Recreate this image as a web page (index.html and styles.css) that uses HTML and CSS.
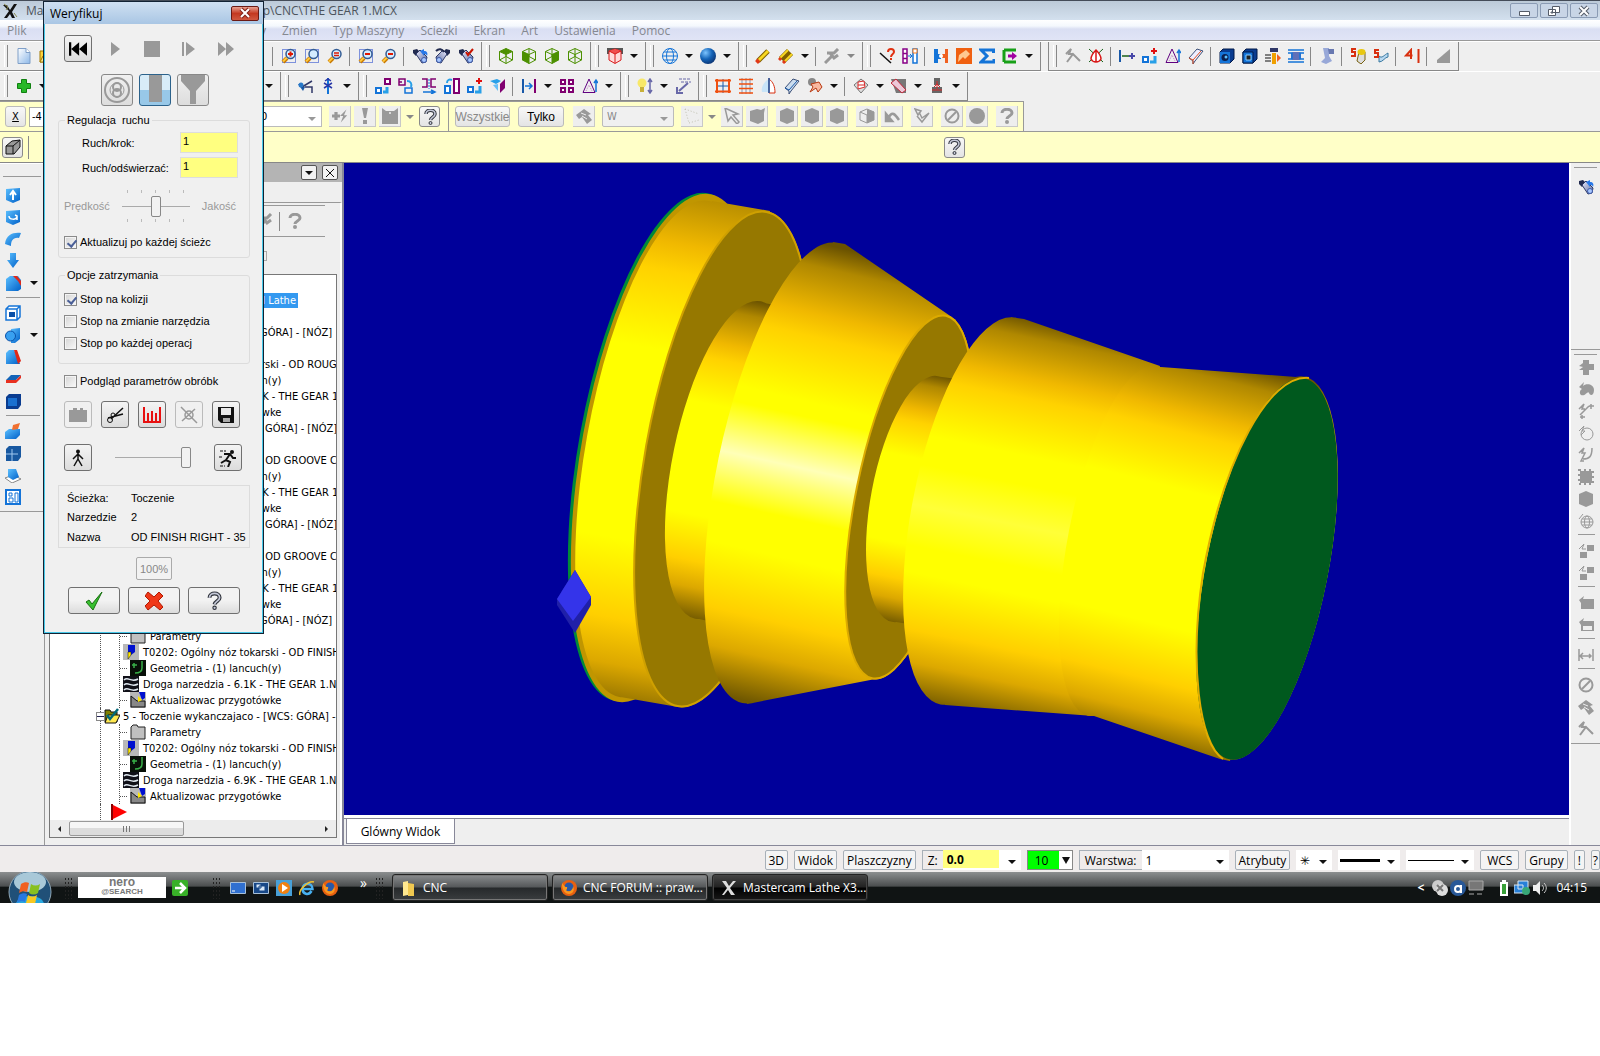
FILE: index.html
```html
<!DOCTYPE html>
<html lang="pl">
<head>
  <meta charset="UTF-8">
  <meta name="viewport" content="width=device-width, initial-scale=1.0">
  <title>Mastercam Lathe X3</title>
  <link rel="stylesheet" href="styles.css">
</head>
<body>
  <!-- icon set -->
  <svg class="sprite" aria-hidden="true">
    <defs>
      <linearGradient id="sheet" x1="0" y1="0" x2="1" y2="1"><stop offset="0" stop-color="#fff"/><stop offset="1" stop-color="#8db8e8"/></linearGradient>
      <linearGradient id="blue" x1="0" y1="0" x2="1" y2="1"><stop offset="0" stop-color="#5cc0ff"/><stop offset="1" stop-color="#0060c8"/></linearGradient>
      <radialGradient id="ball" cx=".35" cy=".3" r=".8"><stop offset="0" stop-color="#7cc4ff"/><stop offset=".5" stop-color="#1464b8"/><stop offset="1" stop-color="#0a2c68"/></radialGradient>
      <linearGradient id="metal" x1="0" y1="0" x2="1" y2="1"><stop offset="0" stop-color="#eef"/><stop offset="1" stop-color="#55669c"/></linearGradient>
    </defs>
    <symbol id="app" viewBox="0 0 16 16"><path d="M1 2h4l3 5 4-6h3l-5 8 3 6h-3l-2-4-3 4H2l5-7z" fill="#111"/><path d="M2 1l4 3-2 3M12 10l3 4" stroke="#8a8a50" fill="none"/></symbol>
    <symbol id="new" viewBox="0 0 16 16"><path d="M2 .5h8l4 4v11H2z" fill="url(#sheet)" stroke="#7f9fc8"/><path d="M10 .5v4h4" fill="#fff" stroke="#7f9fc8"/></symbol>
    <symbol id="open" viewBox="0 0 16 16"><path d="M1 3h5l1 2h8v9H1z" fill="#ffd23c" stroke="#a07800"/><path d="M4 8h11l-3 6H1z" fill="#ffe98a" stroke="#a07800"/></symbol>
    <symbol id="lens" viewBox="0 0 16 16"><path d="M6 10l-4 4" stroke="#c87800" stroke-width="4"/><path d="M6 9.500l-4 4" stroke="#ffc83c" stroke-width="2"/><circle cx="9.500" cy="6" r="4.500" fill="#d4ecff" stroke="#335c94" stroke-width="1.500"/></symbol>
    <symbol id="frame" viewBox="0 0 16 16"><path d="M1.500 1.500h13v13h-13z" fill="none" stroke="#0a32c8" stroke-dasharray="1 1"/></symbol>
    <symbol id="zoom-window" viewBox="0 0 16 16"><use href="#frame"/><use href="#lens"/><path d="M9.500 3.500v5M7 6h5" stroke="#e01800" stroke-width="2"/></symbol>
    <symbol id="zoom-target" viewBox="0 0 16 16"><use href="#frame"/><use href="#lens"/></symbol>
    <symbol id="zoom-fit" viewBox="0 0 16 16"><use href="#lens"/><path d="M7 5h5M7 7.500h5" stroke="#e01800" stroke-width="1.500"/></symbol>
    <symbol id="unzoom-window" viewBox="0 0 16 16"><use href="#frame"/><use href="#lens"/><path d="M7 6h5" stroke="#e01800" stroke-width="2"/></symbol>
    <symbol id="unzoom" viewBox="0 0 16 16"><use href="#lens"/><path d="M7 6h5" stroke="#e01800" stroke-width="2"/></symbol>
    <symbol id="scope" viewBox="0 0 16 16"><path d="M1 2l4-1 3 3-4 4-3-3z" fill="#222b50"/><path d="M4 6l4-4 7 7-1 5-4 1z" fill="url(#metal)" stroke="#2c3868"/><circle cx="12" cy="12" r="2.500" fill="#a8c8ff" stroke="#3c5aa8"/></symbol>
    <symbol id="scope-blue" viewBox="0 0 16 16"><use href="#scope"/><path d="M8 3l4-2v2c3 0 4 2 3 5-1-2-2-2-3-2v2z" fill="#2878e8"/></symbol>
    <symbol id="scope-turn" viewBox="0 0 16 16"><g transform="matrix(-1 0 0 1 16 0)"><use href="#scope"/></g><path d="M1 3c3-3 6-2 8 1" fill="none" stroke="#222b50" stroke-width="2"/></symbol>
    <symbol id="scope-red" viewBox="0 0 16 16"><use href="#scope"/><path d="M8 4l2 3 5-6" fill="none" stroke="#c81400" stroke-width="2"/></symbol>
    <symbol id="cube" viewBox="0 0 16 16"><path d="M8 .5l6.500 3v8.500L8 15.500 1.500 12V3.500zM1.500 3.500L8 6.500l6.500-3M8 6.500v9M8 .5v8M1.500 12L8 8.500l6.500 3.500" fill="none" stroke="#4c9000"/></symbol>
    <symbol id="cube-top" viewBox="0 0 16 16"><path d="M8 .5l6.500 3L8 6.500l-6.500-3z" fill="#4c9000"/><use href="#cube"/></symbol>
    <symbol id="cube-front" viewBox="0 0 16 16"><path d="M1.500 3.500L8 6.500v9L1.500 12z" fill="#4c9000"/><use href="#cube"/></symbol>
    <symbol id="cube-side" viewBox="0 0 16 16"><path d="M14.500 3.500L8 6.500v9l6.500-3.500z" fill="#4c9000"/><use href="#cube"/></symbol>
    <symbol id="cube-red" viewBox="0 0 16 16"><path d="M0 0h16v6H0z" fill="#555"/><path d="M8 1l6 2v9l-6 3.500L2 12V3z" fill="#fdd" stroke="#d81818"/><path d="M2 3l6-2 6 2-6 3z" fill="#f05050"/><path d="M2 3l6 3 6-3M8 6v9" fill="none" stroke="#d81818"/></symbol>
    <symbol id="globe" viewBox="0 0 16 16"><g fill="none" stroke="#1474d8"><circle cx="8" cy="8" r="7.500"/><ellipse cx="8" cy="8" rx="3.500" ry="7.500"/><path d="M.5 8h15M2 4h12M2 12h12"/></g></symbol>
    <symbol id="sphere" viewBox="0 0 16 16"><circle cx="8" cy="8" r="8" fill="url(#ball)"/></symbol>
    <symbol id="pencil" viewBox="0 0 16 16"><path d="M3 13L13 3" stroke="#806000" stroke-width="5"/><path d="M3.500 12.500L13 3" stroke="#f8d820" stroke-width="3"/><path d="M1.500 14.500l2.500-2.500" stroke="#e03818" stroke-width="4"/></symbol>
    <symbol id="pencils" viewBox="0 0 16 16"><path d="M2 10L10 2M6 14l8-8M4 12l8-8" stroke="#806000" stroke-width="3"/><path d="M2 10L10 2M6 14l8-8" stroke="#f8d820" stroke-width="2"/><path d="M1 12l2-2M5 15l2-2" stroke="#e03818" stroke-width="3"/></symbol>
    <symbol id="hammer" viewBox="0 0 16 16"><path d="M1 15l7-7M3 5h7l4-4M6 5l4 5 4-3" stroke="#999" stroke-width="3" fill="none"/></symbol>
    <symbol id="analyze" viewBox="0 0 16 16"><path d="M1 5l11 10" stroke="#111" stroke-width="1.500"/><path d="M9 4c0-4 6-4 6 0 0 2-3 2-3 5M12 10v2" stroke="#e03010" stroke-width="2" fill="none"/></symbol>
    <symbol id="films" viewBox="0 0 16 16"><path d="M1 1h4v14H1zM1 5.500h4M1 10.500h4" fill="#fff" stroke="#880088" stroke-width="1.500"/><path d="M11 1h4v14h-4z" fill="#fff" stroke="#1474d8" stroke-width="1.500"/><path d="M11 1h4v4h-4z" fill="#fff" stroke="#f07820"/><path d="M6 8h4M8 6l2 2-2 2" stroke="#1474d8" fill="none"/></symbol>
    <symbol id="merge" viewBox="0 0 16 16"><path d="M1 1v14h4v-4h3V6H5V1z" fill="#1474d8"/><path d="M15 1v14h-3v-5h-3V6h3V1z" fill="#f06020"/><circle cx="8" cy="8" r="2" fill="#fff"/></symbol>
    <symbol id="orange" viewBox="0 0 16 16"><path d="M0 0h16v16H0z" fill="#f06010"/><path d="M3 7l7-5 4 4-5 5-2-2-5 5" fill="#ffc890"/></symbol>
    <symbol id="sigma" viewBox="0 0 16 16"><path d="M14.500 5V2H2l6 6-6 6h13v-3" fill="none" stroke="#1474d8" stroke-width="3"/></symbol>
    <symbol id="port" viewBox="0 0 16 16"><path d="M14 2H2v12h12" fill="none" stroke="#18a018" stroke-width="3" stroke-dasharray="2 0"/><path d="M6 8h5" stroke="#a000a0" stroke-width="3"/><path d="M10 4l5 4-5 4z" fill="#a000a0"/></symbol>
    <symbol id="wing" viewBox="0 0 16 16"><path d="M1 6l5-5-2 5h4M2 14l6-8 7 7" fill="none" stroke="#999" stroke-width="2"/></symbol>
    <symbol id="drop" viewBox="0 0 16 16"><path d="M1 1l14 13M15 1L1 14" stroke="#186018"/><path d="M8 2c-3 3-5 6-5 9 2 4 8 4 10 0 0-3-2-6-5-9zM8 2v12" fill="#fff" stroke="#d81818" stroke-width="1.500"/></symbol>
    <symbol id="dim" viewBox="0 0 16 16"><path d="M1 2v12" stroke="#1858a8" stroke-width="2"/><path d="M3 8h7" stroke="#186018" stroke-width="1.500"/><path d="M13 5v6M10 8h6" stroke="#4848a8" stroke-width="2"/></symbol>
    <symbol id="boxes-add" viewBox="0 0 16 16"><path d="M1 9h5v5H1z" fill="#fff" stroke="#1474d8" stroke-width="2"/><path d="M8 14h5V8" stroke="#28a0e8" stroke-width="3" fill="none"/><path d="M12 0v6M9 3h6" stroke="#e01010" stroke-width="2"/></symbol>
    <symbol id="triangle" viewBox="0 0 16 16"><path d="M1 14.500L7 1l6 13.500z" fill="none" stroke="#600080"/><path d="M4 13l3-6 3 6" fill="none" stroke="#c080c0" stroke-dasharray="1 1"/><path d="M14 14V3M12 5l2-3 2 3" stroke="#1474d8" stroke-width="1.500" fill="none"/></symbol>
    <symbol id="ruler" viewBox="0 0 16 16"><path d="M1 10L9 1l6 2-8 10-2 3v-3z" fill="#eef" stroke="#3c5078"/><path d="M1 10l4 2v4M5 12l8-9" fill="none" stroke="#e05020"/></symbol>
    <symbol id="ruler-blue" viewBox="0 0 16 16"><path d="M1 10L9 1l6 2-8 10-2 3v-3z" fill="#cde" stroke="#3c5078"/><path d="M1 10l4 2 8-9" fill="none" stroke="#1858a8"/></symbol>
    <symbol id="block-round" viewBox="0 0 16 16"><path d="M1 4l3-3h11v10l-4 4H1z" fill="#0a3c90" stroke="#001848"/><path d="M1 4h10v11H1z" fill="#1474d8"/><circle cx="6" cy="9.500" r="3.500" fill="#0a2050"/><circle cx="7" cy="9" r="1.500" fill="#5cc0ff"/></symbol>
    <symbol id="block-square" viewBox="0 0 16 16"><path d="M1 4l3-3h11v10l-4 4H1z" fill="#0a3c90" stroke="#001848"/><path d="M1 4h10v11H1z" fill="#1474d8" stroke="#001848"/><path d="M4 7h5v5H4z" fill="#222" stroke="#8cf"/></symbol>
    <symbol id="mill" viewBox="0 0 16 16"><path d="M5 0h8v4H5z" fill="#303868"/><path d="M7 5h4v11H7z" fill="#f0a000"/><path d="M12 6l4 4-4 4z" fill="#f06020"/><path d="M0 7h6M0 10h6M0 13h6" stroke="#111"/></symbol>
    <symbol id="lathe" viewBox="0 0 16 16"><rect x="3" y="4" width="10" height="8" rx="2" fill="#6070b8"/><path d="M0 2h16M0 14h16M0 5h4v6H0M16 5h-4v6h4" stroke="#1474d8" fill="none" stroke-width="1.500"/></symbol>
    <symbol id="robot" viewBox="0 0 16 16"><path d="M4 0h6v8l3 5-6 3-5-2 4-4z" fill="#98a8d8"/><path d="M9 1h6v5h-5" fill="#6878b0"/></symbol>
    <symbol id="five-a" viewBox="0 0 16 16"><path d="M9 4h6v8l-4 4-4-3z" fill="#ddd" stroke="#776010"/><ellipse cx="11.500" cy="4" rx="4" ry="3" fill="#e8c810"/><path d="M6 1H2v3h3v4H1" fill="none" stroke="#d83010" stroke-width="2"/></symbol>
    <symbol id="five-b" viewBox="0 0 16 16"><path d="M6 8c3 3 5-1 9-3v4c-3 0-5 5-9 5z" fill="#b8d8f0" stroke="#3878a0"/><path d="M6 2H2v3h3v4H1" fill="none" stroke="#d83010" stroke-width="2"/></symbol>
    <symbol id="four" viewBox="0 0 16 16"><path d="M7 11V2L2 7.500h6.500M14.500 1v14" fill="none" stroke="#d83010" stroke-width="2"/></symbol>
    <symbol id="wedge" viewBox="0 0 16 16"><path d="M15 1v14H2v-3z" fill="#999"/></symbol>
    <symbol id="plus" viewBox="0 0 16 16"><path d="M5.500 1.500h5v4h4v5h-4v4h-5v-4h-4v-5h4z" fill="#28b828" stroke="#108010"/></symbol>
    <symbol id="cut" viewBox="0 0 16 16"><path d="M1 6l5 7 2-4L3 6z" fill="#1858a8"/><path d="M5 9l10-6M8 9h7v6" stroke="#303868" stroke-width="1.500" fill="none"/><circle cx="4" cy="7" r="2.500" fill="#2878c8"/></symbol>
    <symbol id="split" viewBox="0 0 16 16"><path d="M8 0v16" stroke="#1474d8" stroke-width="2"/><path d="M4 5l8 5M12 5l-8 5M5 3l3-2 3 2" stroke="#2838a8" stroke-width="1.500" fill="none"/></symbol>
    <symbol id="x-move" viewBox="0 0 16 16"><path d="M10 1h5v5h-5z" fill="#fff" stroke="#800070" stroke-width="2"/><path d="M1 10h5v5H1z" fill="#fff" stroke="#1474d8" stroke-width="2"/><path d="M8 14h4V9" stroke="#28a0e8" stroke-width="3" fill="none"/></symbol>
    <symbol id="x-rotate" viewBox="0 0 16 16"><path d="M1 1h6v6H1zM1 4h3" fill="none" stroke="#800070" stroke-width="1.500"/><path d="M7 10h7v5H7z" fill="none" stroke="#1474d8" stroke-width="1.500"/><path d="M9 3c4 0 5 3 4 6" stroke="#28a0e8" stroke-width="2" fill="none"/></symbol>
    <symbol id="x-mirror" viewBox="0 0 16 16"><path d="M1 1h5v8H1M15 9h-5V1h5" fill="none" stroke="#800070" stroke-width="1.500"/><path d="M8 1v10" stroke="#1474d8" stroke-dasharray="2 1"/><path d="M2 14h11M10 12l4 2-4 2" stroke="#1474d8" stroke-width="1.500" fill="none"/></symbol>
    <symbol id="x-scale" viewBox="0 0 16 16"><path d="M10 1h5v14h-5z" fill="#fff" stroke="#800070" stroke-width="2"/><path d="M1 8h5v7H1z" fill="#fff" stroke="#1474d8" stroke-width="2"/><path d="M3 5c0-3 2-4 5-3" stroke="#28a0e8" stroke-width="2" fill="none"/></symbol>
    <symbol id="x-project" viewBox="0 0 16 16"><path d="M0 3l7-2 4 2-5 3z" fill="#28a0e8"/><path d="M3 7l5-1v7z" fill="#68c0f8"/><path d="M10 6l5-5v9l-5 5z" fill="#800070"/></symbol>
    <symbol id="x-stretch" viewBox="0 0 16 16"><path d="M2 1v14M14 1v14" stroke="#1858a8" stroke-width="2"/><path d="M14 1v14" stroke="#800070" stroke-width="2"/><path d="M4 8h7M8 5l3 3-3 3" stroke="#1474d8" stroke-width="1.500" fill="none"/></symbol>
    <symbol id="x-array" viewBox="0 0 16 16"><path d="M2 2h4v4H2zM10 2h4v4h-4zM10 10h4v4h-4zM2 10h4v4H2z" fill="#fff" stroke="#800070" stroke-width="2"/></symbol>
    <symbol id="bulb" viewBox="0 0 16 16"><circle cx="5" cy="5" r="4.500" fill="#f8e868"/><path d="M3 9h4v5H3z" fill="#c8b038"/><path d="M13 2v12M11 4l2-3 2 3M11 12l2 3 2-3" stroke="#6868a8" stroke-width="1.500" fill="none"/></symbol>
    <symbol id="sweep" viewBox="0 0 16 16"><path d="M4 1h12M6 4h10" stroke="#6868a8" stroke-dasharray="3 1"/><path d="M13 5l-9 8M2 9v6h6" stroke="#6868a8" stroke-width="2" fill="none"/></symbol>
    <symbol id="net" viewBox="0 0 16 16"><path d="M8 1v14M1 8h14" stroke="#1858a8"/><path d="M2 1v14M14 1v14M0 2.500h16M0 13.500h16" stroke="#f05010" stroke-width="2"/></symbol>
    <symbol id="ruled" viewBox="0 0 16 16"><path d="M8 0v16M4 0v16M12 0v16" stroke="#8898b8"/><path d="M1 1.500h14M1 6h14M1 10.500h14M1 15h14" stroke="#f05010" stroke-width="1.500"/></symbol>
    <symbol id="revolve" viewBox="0 0 16 16"><path d="M8 1C2 4 0 10 1 14h7z" fill="#c8e4f8"/><path d="M8 0v15h6c0-7-2-11-6-14" fill="#fff" stroke="#d83010"/><path d="M8 0v15" stroke="#1858a8" stroke-width="1.500"/></symbol>
    <symbol id="patch" viewBox="0 0 16 16"><circle cx="5" cy="4" r="4" fill="#888"/><path d="M4 6l8-2 3 5-4 5-2-4-6 4 3-5z" fill="#f8b8a0" stroke="#b83810"/></symbol>
    <symbol id="solid-grid" viewBox="0 0 16 16"><path d="M1 7l7-6 7 6-7 8z" fill="#ddd" stroke="#777"/><path d="M5 4l6-1 1 6-7 2zM5 7h7" fill="#fff" stroke="#d82828"/></symbol>
    <symbol id="shade" viewBox="0 0 16 16"><path d="M0 1h15v14H5z" fill="#777"/><path d="M0 5l5-4 10 11-4 3z" fill="#ecc8d8" stroke="#c02838"/></symbol>
    <symbol id="tower" viewBox="0 0 16 16"><path d="M5 0h6v7H5zM3 9h10v6H3z" fill="#666"/><path d="M8 3v8M3 12h10M5 9l3-3 3 3" stroke="#d82828" fill="none"/></symbol>
    <symbol id="g-plusbolt" viewBox="0 0 20 16"><path d="M5 3v10M0 8h10" stroke="#999" stroke-width="4"/><path d="M18 0l-8 8h4l-3 8 8-9h-4z" fill="#999"/></symbol>
    <symbol id="g-bang" viewBox="0 0 16 16"><path d="M5 0h6L9 10H7zM6 12h4v4H6z" fill="#999"/></symbol>
    <symbol id="g-mask" viewBox="0 0 16 16"><path d="M0 0l4 3h8l4-3v16H0z" fill="#999"/><circle cx="8" cy="5" r="1" fill="#eee"/></symbol>
    <symbol id="help" viewBox="0 0 16 16"><path d="M4 5c0-5 9-5 9 0 0 3-4 3-4.500 6" fill="none" stroke="#30343c" stroke-width="3.500"/><path d="M4 5c0-5 9-5 9 0 0 3-4 3-4.500 6" fill="none" stroke="#c4c8d8" stroke-width="1.500"/><circle cx="8.500" cy="14" r="1.500" fill="#c4c8d8" stroke="#30343c"/></symbol>
    <symbol id="g-help" viewBox="0 0 16 16"><path d="M3 5c0-5 10-5 10 0 0 3-5 3-5 6" fill="none" stroke="#999" stroke-width="3"/><circle cx="8" cy="14" r="2" fill="#999"/></symbol>
    <symbol id="g-hands" viewBox="0 0 16 16"><path d="M0 7l8-6 7 5-3 1 4 5-5 4-5-7-3 2z" fill="#999"/><path d="M5 5l5 2M6 8l5 3" stroke="#eee"/></symbol>
    <symbol id="g-arrow" viewBox="0 0 16 16"><path d="M1 0l13 6-5 1 6 7-2 2-6-7-3 4z" fill="#eee" stroke="#999" stroke-width="1.500"/></symbol>
    <symbol id="g-poly" viewBox="0 0 16 16"><path d="M1 1l14 5M1 1l4 14M5 15l10-3" stroke="#c0c0b0" stroke-dasharray="1 2"/></symbol>
    <symbol id="g-hex" viewBox="0 0 16 16"><path d="M8 0l7 3v10l-7 3-7-3V3z" fill="#999"/></symbol>
    <symbol id="g-blob" viewBox="0 0 16 16"><path d="M1 3l7-2 4 1 4-2-1 5v8l-6 3-8-3z" fill="#999"/></symbol>
    <symbol id="g-half" viewBox="0 0 16 16"><path d="M8 1l7 3v8l-7 3-7-3V4zM1 4l7 3 7-3M8 7v8" fill="none" stroke="#999"/><path d="M8 1l7 3v8l-7 3z" fill="#999"/></symbol>
    <symbol id="g-undo" viewBox="0 0 16 16"><path d="M2 6v7h6zM5 9c3-6 6-3 10 3" fill="#999" stroke="#999" stroke-width="2.500" fill-opacity="0"/><path d="M1 5v8h8z" fill="#999"/></symbol>
    <symbol id="g-check" viewBox="0 0 16 16"><path d="M1 1l6 2-3 4zM3 8l5 6 7-9-7 5-3-6" fill="none" stroke="#999" stroke-width="1.500"/></symbol>
    <symbol id="g-no" viewBox="0 0 16 16"><circle cx="8" cy="8" r="6.500" fill="none" stroke="#999" stroke-width="2"/><path d="M4 12l8-8" stroke="#999" stroke-width="2"/></symbol>
    <symbol id="g-disc" viewBox="0 0 16 16"><circle cx="8" cy="8" r="8" fill="#999"/></symbol>
    <symbol id="g-plus" viewBox="0 0 16 16"><path d="M5 1h6v4h5v6h-5v5H5v-5H1l4-3-4-1 4-3z" fill="#999"/></symbol>
    <symbol id="g-cloud" viewBox="0 0 16 16"><path d="M1 6l5-5-1 4c3-3 11-2 11 4s-4 6-5 3-4 4-8 2c-2-2-1-5 1-6z" fill="#999"/></symbol>
    <symbol id="g-lines" viewBox="0 0 16 16"><path d="M1 6l5-5-2 5h3M2 12l9-9M13 1v5M11 3h5M4 12v4M2 14h5" stroke="#999" fill="none" stroke-width="1.500"/></symbol>
    <symbol id="g-circle" viewBox="0 0 16 16"><circle cx="9" cy="9" r="6" fill="none" stroke="#999"/><path d="M1 6l5-5-2 5h3l-4 4" stroke="#999" fill="none"/></symbol>
    <symbol id="g-fillet" viewBox="0 0 16 16"><path d="M1 6l5-5-2 5h3L3 14h3M5 12c6 0 9-2 9-11" stroke="#999" fill="none" stroke-width="1.500"/></symbol>
    <symbol id="g-rect" viewBox="0 0 16 16"><path d="M2 2h12v12H2z" fill="#999"/><path d="M1 1h14v14H1z" fill="none" stroke="#999" stroke-dasharray="2 3" stroke-width="2"/></symbol>
    <symbol id="g-web" viewBox="0 0 16 16"><g fill="none" stroke="#999"><circle cx="9" cy="9" r="6"/><ellipse cx="9" cy="9" rx="2.500" ry="6"/><path d="M3 9h12M4 6h10M4 12h10M1 6l4-5"/></g></symbol>
    <symbol id="g-pair" viewBox="0 0 16 16"><path d="M9 2h7v6H9zM2 9h7v6H2z" fill="#999"/><path d="M1 6l5-5-2 5h4" stroke="#999" fill="none"/></symbol>
    <symbol id="g-box" viewBox="0 0 16 16"><path d="M1 5l5-4-1 3h11v10H3V8z" fill="#999"/></symbol>
    <symbol id="g-boxline" viewBox="0 0 16 16"><path d="M1 5l5-4-1 3h11v10H3V8z" fill="#999"/><path d="M5 9h9v4H5z" fill="#eee"/></symbol>
    <symbol id="g-dim" viewBox="0 0 16 16"><path d="M1 2v12M15 2v12M3 9h10M5 6L2 9l3 3M11 7l2 2-2 2" stroke="#999" fill="none" stroke-width="1.500"/></symbol>
    <symbol id="cube-button" viewBox="0 0 16 16"><path d="M1 7l6-5 8-1v7l-6 7H1z" fill="#999" stroke="#111"/><path d="M1 7h7l7-6M8 7v8" fill="none" stroke="#111"/></symbol>
    <!-- solids bar -->
    <symbol id="s-up" viewBox="0 0 16 16"><path d="M1 2l14-1v12l-7 3-7-3z" fill="url(#blue)"/><path d="M8 13V5M5 8l3-4 3 4" stroke="#fff" stroke-width="2" fill="none"/></symbol>
    <symbol id="s-turn" viewBox="0 0 16 16"><path d="M1 2l14-1v12l-7 3-7-3z" fill="url(#blue)"/><path d="M4 7c0 4 7 4 8 1M10 6l2 1v4" stroke="#fff" stroke-width="1.500" fill="none"/></symbol>
    <symbol id="s-arc" viewBox="0 0 16 16"><path d="M0 13C1 3 9 1 16 2l-2 5C8 6 6 10 6 15z" fill="url(#blue)"/></symbol>
    <symbol id="s-down" viewBox="0 0 16 16"><path d="M5 0h6v7h3l-6 8-6-8h3z" fill="url(#blue)"/></symbol>
    <symbol id="s-fillet" viewBox="0 0 16 16"><path d="M1 4l4-3h8l3 4v9l-3 2H1z" fill="url(#blue)"/><path d="M8 1h4l4 5v5l-3-5z" fill="#e02818"/></symbol>
    <symbol id="s-shell" viewBox="0 0 16 16"><path d="M1 4l3-3h11v11l-3 3H1zM1 4h11v11M12 4l3-3" fill="#fff" stroke="#1474d8" stroke-width="1.500"/><path d="M4 7h6v5H4z" fill="#0a50a8"/></symbol>
    <symbol id="s-bool" viewBox="0 0 16 16"><path d="M6 2l9-1v11l-5 4H6z" fill="url(#blue)"/><circle cx="5.500" cy="9" r="5" fill="#38a0f0" stroke="#0a50a8"/></symbol>
    <symbol id="s-draft" viewBox="0 0 16 16"><path d="M1 4l3-3h5l6 14H1z" fill="url(#blue)"/><path d="M9 1h3l4 11-3 3z" fill="#e02818"/></symbol>
    <symbol id="s-trim" viewBox="0 0 16 16"><path d="M1 9l5-5h10l-5 5z" fill="#1464b8"/><path d="M1 9h10l5-5v3l-5 5H1z" fill="#e83020"/></symbol>
    <symbol id="s-block" viewBox="0 0 16 16"><path d="M1 4l3-3h12v11l-3 4H1z" fill="#0a3c90"/><path d="M3 5h9v8H3z" fill="#1a70d0"/></symbol>
    <symbol id="s-pull" viewBox="0 0 16 16"><path d="M0 9l4-3h11v6l-4 4H0z" fill="url(#blue)"/><path d="M7 7l1-5 7-2-2 6z" fill="#f07030"/></symbol>
    <symbol id="s-find" viewBox="0 0 16 16"><path d="M1 4l3-3h12v11l-3 4H1z" fill="#1858a0"/><path d="M1 9h12M7 4v12" stroke="#a0c8f0"/></symbol>
    <symbol id="s-layout" viewBox="0 0 16 16"><path d="M0 11l8-3 8 4-9 4z" fill="#fff" stroke="#888"/><path d="M3 2h8l3 8-6 3-5-3z" fill="url(#blue)"/></symbol>
    <symbol id="s-views" viewBox="0 0 16 16"><path d="M1 1h14v14H1z" fill="#fff" stroke="#1474d8" stroke-width="2"/><path d="M4 4h3v3H4zM4 9h4v4H4zM10 4h3v9h-3z" fill="none" stroke="#1474d8"/></symbol>
    <!-- operations tree -->
    <symbol id="t-folder" viewBox="0 0 16 16"><path d="M1 3l2-2h4l1 2h7v12H1z" fill="#c0c0c0" stroke="#222"/></symbol>
    <symbol id="t-tool" viewBox="0 0 16 16"><path d="M0 0h16v16H0z" fill="#b8b8b8"/><path d="M5 1h7v7l-4 3-3-3z" fill="#0010d0"/><path d="M5 8h3v3l-3 4z" fill="#ffe800" stroke="#111" stroke-width=".5"/></symbol>
    <symbol id="t-geom" viewBox="0 0 16 16"><path d="M0 0h16v16H0z" fill="#081008"/><path d="M4 3v5M2 5h5M12 1v7c0 4-3 5-7 5" stroke="#38b048" fill="none" stroke-width="1.500"/></symbol>
    <symbol id="t-path" viewBox="0 0 16 16"><path d="M0 0h16v16H0z" fill="#101018"/><path d="M1 4c4-4 7 3 14-1M1 9c4-4 7 3 14-1M1 14c4-4 7 3 14-1" stroke="#e0e8f0" stroke-width="1.500" fill="none"/></symbol>
    <symbol id="t-stock" viewBox="0 0 16 16"><path d="M0 0h16v16H0z" fill="#b8b8b8"/><path d="M1 4l6 5h8v6H1z" fill="#888" stroke="#111"/><path d="M9 0h6v6l-3 2z" fill="#0010d0"/><path d="M8 4l4 4-4 2z" fill="#ffe800"/></symbol>
    <symbol id="t-op" viewBox="0 0 16 16"><path d="M1 2h5l1 2h6v10H1z" fill="#808000" stroke="#111"/><path d="M4 7h12l-4 8H1z" fill="#ffe850" stroke="#111"/><path d="M3 7l3 4 8-10" stroke="#006878" stroke-width="2.500" fill="none"/></symbol>
    <!-- verify dialog -->
    <symbol id="v-start" viewBox="0 0 16 16"><path d="M0 2h2v12H0zM9 2v12L2 8zM16 2v12L9 8z" fill="#000"/></symbol>
    <symbol id="v-play" viewBox="0 0 16 16"><path d="M4 1l9 7-9 7z" fill="#999"/></symbol>
    <symbol id="v-stop" viewBox="0 0 16 16"><path d="M0 0h16v16H0z" fill="#999"/></symbol>
    <symbol id="v-step" viewBox="0 0 16 16"><path d="M1 1h2v14H1zM5 1l9 7-9 7z" fill="#999"/></symbol>
    <symbol id="v-fast" viewBox="0 0 16 16"><path d="M0 1l8 7-8 7zM8 1l8 7-8 7z" fill="#999"/></symbol>
    <symbol id="v-simtool" viewBox="0 0 30 30"><g fill="none" stroke="#999" stroke-width="2"><circle cx="15" cy="15" r="12"/><circle cx="15" cy="12" r="4"/><circle cx="15" cy="18" r="4"/><circle cx="15" cy="15" r="7" stroke-width="1"/></g></symbol>
    <symbol id="v-tool" viewBox="0 0 30 30"><path d="M9 0h13v27H9z" fill="#999"/></symbol>
    <symbol id="v-holder" viewBox="0 0 30 30"><path d="M3 0h24v6l-9 10v13h-6V16L3 6z" fill="#999"/></symbol>
    <symbol id="v-setup" viewBox="0 0 18 18"><path d="M0 4h4V2h4v2h3V2h3v2h4v12H0z" fill="#999"/></symbol>
    <symbol id="v-section" viewBox="0 0 18 18"><path d="M17 2L5 13M17 8L2 12" stroke="#111" stroke-width="1.500"/><circle cx="7" cy="9" r="2" fill="none" stroke="#111"/><circle cx="4" cy="14" r="2.500" fill="none" stroke="#111"/></symbol>
    <symbol id="v-measure" viewBox="0 0 18 18"><path d="M1 1v15h16V1M5 16V7M9 16V5M13 16V7" fill="none" stroke="#e81010" stroke-width="2"/></symbol>
    <symbol id="v-fit" viewBox="0 0 18 18"><circle cx="9" cy="9" r="4" fill="none" stroke="#999" stroke-width="1.500"/><path d="M1 1l16 16M15 3L2 15" stroke="#999" stroke-width="1.500"/></symbol>
    <symbol id="v-save" viewBox="0 0 18 18"><path d="M1 1h16v16H4l-3-3z" fill="#111"/><path d="M4 2h10v7H4z" fill="#e8e8e8"/><path d="M6 12h7v4H6z" fill="#aaa"/></symbol>
    <symbol id="v-walk" viewBox="0 0 18 18"><circle cx="9" cy="2.500" r="2" fill="#111"/><path d="M9 4v6M9 10l-4 7M9 10l4 7M4 10l5-5 5 5" stroke="#111" stroke-width="1.500" fill="none"/></symbol>
    <symbol id="v-run" viewBox="0 0 18 18"><circle cx="13" cy="3" r="2" fill="#111"/><path d="M11 5l-4 6 4 2-2 5M7 11l-5 3M5 5h6l3 4h3" stroke="#111" stroke-width="2" fill="none"/><path d="M1 2h6M0 8h4M1 17h5" stroke="#111" stroke-dasharray="3 1"/></symbol>
    <symbol id="v-ok" viewBox="0 0 18 18"><path d="M1 10l3-2 3 4L17 0 8 18z" fill="#38c030" stroke="#187010"/></symbol>
    <symbol id="v-cancel" viewBox="0 0 18 18"><path d="M3 0l6 5 5-5 4 4-5 5 5 6-3 3-6-5-6 5-3-4 5-5-5-5z" fill="#f03818" stroke="#b01800"/></symbol>
    <!-- taskbar -->
    <symbol id="k-orb" viewBox="0 0 44 44"><circle cx="22" cy="22" r="21" fill="#205078" stroke="#90a8b8"/><ellipse cx="22" cy="12" rx="16" ry="10" fill="#a8c8d8"/><ellipse cx="22" cy="34" rx="14" ry="8" fill="#28a8e0"/><path d="M13 14c3-2 6-2 8-1l-2 9c-2-1-5-1-8 1z" fill="#f06020"/><path d="M23 14c3 2 6 2 9 0l-2 9c-3 2-6 2-9 0z" fill="#88c020"/><path d="M11 25c3-2 6-2 8-1l-2 8c-2-1-5-1-8 1z" fill="#2878e0"/><path d="M20 25c3 2 6 2 9 0l-2 9c-3 2-6 1-9-1z" fill="#f8c820"/></symbol>
    <symbol id="k-go" viewBox="0 0 16 16"><rect width="16" height="16" rx="2" fill="#38b028"/><path d="M3 8h9M8 3l5 5-5 5" stroke="#fff" stroke-width="2.500" fill="none"/></symbol>
    <symbol id="k-desk" viewBox="0 0 16 16"><path d="M.5 2.500h15v11H.5z" fill="#3070d0" stroke="#a8c0d8"/><path d="M2 11h3" stroke="#fff"/></symbol>
    <symbol id="k-flip" viewBox="0 0 16 16"><path d="M.5 2.500h15v11H.5z" fill="#184888" stroke="#a8c0d8"/><path d="M3 4h5v4H3zM6 6h6v5H6z" fill="#d8e8f8" stroke="#184888"/></symbol>
    <symbol id="k-media" viewBox="0 0 16 16"><path d="M0 0h16v16H0z" fill="#48a0d8"/><circle cx="8" cy="8" r="6" fill="#f08010"/><path d="M6 4l6 4-6 4z" fill="#fff"/></symbol>
    <symbol id="k-ie" viewBox="0 0 16 16"><path d="M12.500 11c-3 5-9 3-9-2 0-7 10-7 10 0H4" fill="none" stroke="#48b0f0" stroke-width="2.500"/><path d="M1 15C-1 10 10 0 15 2" stroke="#f0c030" fill="none" stroke-width="1.500"/></symbol>
    <symbol id="k-fox" viewBox="0 0 16 16"><circle cx="8" cy="8" r="8" fill="#e86010"/><circle cx="8" cy="7" r="4.500" fill="#2858a8"/><path d="M1 3c2 2 2 4 5 4 1 2-2 3 0 4 3 1 6-1 6-5 2 4 0 8-4 8S1 10 1 3z" fill="#f89820"/></symbol>
    <symbol id="k-folder" viewBox="0 0 16 16"><path d="M2 2l5-1v14l-5 1z" fill="#ffe890"/><path d="M7 3l6 1v12H7z" fill="#f0c850"/></symbol>
    <symbol id="k-x" viewBox="0 0 16 16"><path d="M1 1h4l3 5 4-5h3L9 8l5 7h-4l-3-5-4 5H1l5-7z" fill="#ddd"/></symbol>
    <symbol id="k-skype" viewBox="0 0 16 16"><circle cx="6" cy="6" r="6" fill="#ccc"/><circle cx="10" cy="10" r="6" fill="#ddd"/><path d="M5 5l6 6M11 5l-6 6" stroke="#777" stroke-width="2"/></symbol>
    <symbol id="k-a" viewBox="0 0 16 16"><circle cx="8" cy="8" r="8" fill="#285898"/><circle cx="8" cy="9" r="3" fill="none" stroke="#fff" stroke-width="2"/><path d="M11 5v8" stroke="#fff" stroke-width="2"/></symbol>
    <symbol id="k-screen" viewBox="0 0 16 16"><path d="M1 1h14v9H1zM1 14h5M9 14h5" fill="#777" stroke="#aaa"/></symbol>
    <symbol id="k-batt" viewBox="0 0 16 16"><path d="M6 0h4v2h2v14H4V2h2z" fill="#fff"/><path d="M6 4h4v10H6z" fill="#38a038"/></symbol>
    <symbol id="k-net" viewBox="0 0 16 16"><path d="M4 1h10v8H4zM0 5h9v8H0z" fill="#2880d8" stroke="#dde8f0"/><circle cx="12" cy="11" r="4" fill="#38a878"/></symbol>
    <symbol id="k-vol" viewBox="0 0 16 16"><path d="M1 5h3l4-4v14l-4-4H1z" fill="#eee"/><path d="M10 5c2 2 2 4 0 6M12 3c3 3 3 7 0 10" stroke="#ccc" fill="none"/></symbol>
  </svg>

  <div class="app">
    <header class="titlebar">
      <svg><use href="#app"/></svg>
      <div class="caption"><span>Mastercam Lathe X3</span><span>C:\Desktop\CNC\THE GEAR 1.MCX</span></div>
      <div class="window-buttons">
        <button aria-label="Minimalizuj"><svg viewBox="0 0 14 12"><path d="M2.500 6.500h10v4h-10z" fill="#fff" stroke="#555c68"/></svg></button>
        <button aria-label="Przywróć"><svg viewBox="0 0 14 12"><path d="M5.500 1.500h7v6h-7zM1.500 4.500h7v6h-7zM4 7h2v1H4z" fill="#fff" stroke="#555c68"/></svg></button>
        <button aria-label="Zamknij"><svg viewBox="0 0 14 12"><path d="M3 2l8 8M11 2l-8 8" stroke="#555c68" stroke-width="4"/><path d="M3 2l8 8M11 2l-8 8" stroke="#fff" stroke-width="2"/></svg></button>
      </div>
    </header>

    <nav class="menu">
      <div class="menu-first"><a href="#">Plik</a><a href="#">Edycja</a><a href="#">Widok</a><a href="#">Analiza</a><a href="#">Bryly</a></div>
      <a href="#">Zmien</a><a href="#">Typ Maszyny</a><a href="#">Sciezki</a><a href="#">Ekran</a><a href="#">Art</a><a href="#">Ustawienia</a><a href="#">Pomoc</a>
    </nav>

    <div class="toolbar">
      <div class="group file-group">
        <button><svg><use href="#new"/></svg></button><button><svg><use href="#open"/></svg></button>
        <i class="sep push"></i>
        <button><svg><use href="#zoom-window"/></svg></button><button><svg><use href="#zoom-target"/></svg></button><button><svg><use href="#zoom-fit"/></svg></button>
        <i class="sep"></i>
        <button><svg><use href="#unzoom-window"/></svg></button><button><svg><use href="#unzoom"/></svg></button>
        <i class="sep"></i>
        <button><svg><use href="#scope-blue"/></svg></button><button><svg><use href="#scope-turn"/></svg></button><button><svg><use href="#scope-red"/></svg></button>
      </div>
      <div class="group"><button><svg><use href="#cube-top"/></svg></button><button><svg><use href="#cube-front"/></svg></button><button><svg><use href="#cube-side"/></svg></button><button><svg><use href="#cube"/></svg></button></div>
      <div class="group"><button><svg><use href="#cube-red"/></svg></button><button class="drop"></button></div>
      <div class="group"><button><svg><use href="#globe"/></svg></button><button class="drop"></button><button><svg><use href="#sphere"/></svg></button><button class="drop"></button></div>
      <div class="group"><button><svg><use href="#pencil"/></svg></button><button><svg><use href="#pencils"/></svg></button><button class="drop"></button><i class="sep"></i><button><svg><use href="#hammer"/></svg></button><button class="drop off"></button></div>
      <div class="group"><button><svg><use href="#analyze"/></svg></button><button><svg><use href="#films"/></svg></button><i class="sep"></i><button><svg><use href="#merge"/></svg></button><button><svg><use href="#orange"/></svg></button><button><svg><use href="#sigma"/></svg></button><button><svg><use href="#port"/></svg></button><button class="drop"></button></div>
      <div class="group apart"><button><svg><use href="#wing"/></svg></button><button><svg><use href="#drop"/></svg></button><i class="sep"></i><button><svg><use href="#dim"/></svg></button><button><svg><use href="#boxes-add"/></svg></button><button><svg><use href="#triangle"/></svg></button><button><svg><use href="#ruler"/></svg></button><i class="sep"></i><button><svg><use href="#block-round"/></svg></button><button><svg><use href="#block-square"/></svg></button><button><svg><use href="#mill"/></svg></button><button><svg><use href="#lathe"/></svg></button><i class="sep"></i><button><svg><use href="#robot"/></svg></button><i class="sep"></i><button><svg><use href="#five-a"/></svg></button><button><svg><use href="#five-b"/></svg></button><i class="sep"></i><button><svg><use href="#four"/></svg></button><i class="sep"></i><button><svg><use href="#wedge"/></svg></button></div>
    </div>

    <div class="toolbar">
      <div class="group sketch-group"><button><svg><use href="#plus"/></svg></button><button class="drop"></button><button class="drop push"></button></div>
      <div class="group"><button><svg><use href="#cut"/></svg></button><button><svg><use href="#split"/></svg></button><button class="drop"></button></div>
      <div class="group"><button><svg><use href="#x-move"/></svg></button><button><svg><use href="#x-rotate"/></svg></button><button><svg><use href="#x-mirror"/></svg></button><button><svg><use href="#x-scale"/></svg></button><button><svg><use href="#boxes-add"/></svg></button><button><svg><use href="#x-project"/></svg></button><i class="sep"></i><button><svg><use href="#x-stretch"/></svg></button><button class="drop"></button><button><svg><use href="#x-array"/></svg></button><button><svg><use href="#triangle"/></svg></button><button class="drop"></button></div>
      <div class="group"><button><svg><use href="#bulb"/></svg></button><button class="drop"></button><button><svg><use href="#sweep"/></svg></button></div>
      <div class="group"><button><svg><use href="#net"/></svg></button><button><svg><use href="#ruled"/></svg></button><button><svg><use href="#revolve"/></svg></button><button><svg><use href="#ruler-blue"/></svg></button><button><svg><use href="#patch"/></svg></button><button class="drop"></button><i class="sep"></i><button><svg><use href="#solid-grid"/></svg></button><button class="drop"></button><button><svg><use href="#shade"/></svg></button><button class="drop"></button><button><svg><use href="#tower"/></svg></button><button class="drop"></button></div>
    </div>

    <div class="ribbon">
      <div class="ribbon-bar">
        <div class="coords">
          <button class="raised axis">X</button>
          <input class="coord" value="-4" aria-label="X">
          <div class="combo coord-z"><select aria-label="Z"><option>0</option></select></div>
          <button class="flat"><svg><use href="#g-plusbolt"/></svg></button><button class="flat"><svg><use href="#g-bang"/></svg></button><button class="flat"><svg><use href="#g-mask"/></svg></button><button class="drop off slim"></button><button class="raised square"><svg><use href="#help"/></svg></button>
        </div>
        <div class="select-bar">
          <button class="raised word off">Wszystkie</button>
          <button class="raised word tylko">Tylko</button>
          <button class="flat"><svg><use href="#g-hands"/></svg></button>
          <div class="combo filter"><select aria-label="Filtr" disabled><option>W</option></select></div>
          <button class="flat"><svg><use href="#g-poly"/></svg></button><button class="drop off slim"></button>
          <button class="flat"><svg><use href="#g-arrow"/></svg></button><button class="flat"><svg><use href="#g-blob"/></svg></button><i class="gap"></i>
          <button class="flat"><svg><use href="#g-hex"/></svg></button><button class="flat"><svg><use href="#g-hex"/></svg></button><button class="flat"><svg><use href="#g-hex"/></svg></button><i class="gap"></i>
          <button class="flat"><svg><use href="#g-half"/></svg></button><button class="flat"><svg><use href="#g-undo"/></svg></button><i class="gap"></i>
          <button class="flat"><svg><use href="#g-check"/></svg></button><i class="gap"></i>
          <button class="flat"><svg><use href="#g-no"/></svg></button><button class="flat"><svg><use href="#g-disc"/></svg></button><i class="gap"></i>
          <button class="flat"><svg><use href="#g-help"/></svg></button>
        </div>
      </div>
    </div>
    <div class="prompt">
      <button class="raised square"><svg><use href="#cube-button"/></svg></button>
      <i class="sep"></i>
      <button class="raised square prompt-help"><svg><use href="#help"/></svg></button>
    </div>

    <main class="work">
      <aside class="solids">
        <div class="solids-bar">
          <button><svg><use href="#s-up"/></svg></button>
          <button><svg><use href="#s-turn"/></svg></button>
          <button><svg><use href="#s-arc"/></svg></button>
          <button><svg><use href="#s-down"/></svg></button>
          <div><button><svg><use href="#s-fillet"/></svg></button><button class="drop"></button></div>
          <hr>
          <button><svg><use href="#s-shell"/></svg></button>
          <div><button><svg><use href="#s-bool"/></svg></button><button class="drop"></button></div>
          <button><svg><use href="#s-draft"/></svg></button>
          <button><svg><use href="#s-trim"/></svg></button>
          <button><svg><use href="#s-block"/></svg></button>
          <hr>
          <button><svg><use href="#s-pull"/></svg></button>
          <button><svg><use href="#s-find"/></svg></button>
          <button><svg><use href="#s-layout"/></svg></button>
          <button><svg><use href="#s-views"/></svg></button>
        </div>
      </aside>

      <section class="manager">
        <div class="manager-head">
          <button class="down" aria-label="Menu"></button>
          <button aria-label="Zamknij"><svg viewBox="0 0 10 10"><path d="M1 1l8 8M9 1l-8 8" stroke="#111"/></svg></button>
        </div>
        <div class="manager-tabs"></div>
        <div class="manager-body">
          <div class="manager-tools"><svg><use href="#hammer"/></svg><i class="sep"></i><svg><use href="#g-help"/></svg></div>
          <div class="manager-mini"><i></i></div>
          <div class="tree">
            <ul class="root">
              <li><div class="row">Grupa maszyn-1</div></li>
              <li><div class="row machine"><span>Wlasciwosci - Default Mill and Lathe</span></div></li>
              <li><div class="row">Grupa sciezek-1</div></li>
            </ul>
            <ul class="ops">
              <li>
                <div class="row op"><b></b><svg><use href="#t-op"/></svg>1 - Toczenie czola - [WCS: GÓRA] - [NÓZ]</div>
                <ul class="steps">
                  <li class="row"><svg><use href="#t-folder"/></svg>Parametry</li>
                  <li class="row"><svg><use href="#t-tool"/></svg>T0101: Ogólny nóz tokarski - OD ROUGH RIGHT</li>
                  <li class="row"><svg><use href="#t-geom"/></svg>Geometria - (1) lancuch(y)</li>
                  <li class="row"><svg><use href="#t-path"/></svg>Droga narzedzia - 112.1K - THE GEAR 1.NC</li>
                  <li class="row"><svg><use href="#t-stock"/></svg>Aktualizowac przygotówke</li>
                </ul>
              </li>
              <li>
                <div class="row op"><b></b><svg><use href="#t-op"/></svg>2 - Toczenie rowków - [WCS: GÓRA] - [NÓZ]</div>
                <ul class="steps">
                  <li class="row"><svg><use href="#t-folder"/></svg>Parametry</li>
                  <li class="row"><svg><use href="#t-tool"/></svg>T1818: Nóz do rowków - OD GROOVE CENTER</li>
                  <li class="row"><svg><use href="#t-geom"/></svg>Geometria - (1) lancuch(y)</li>
                  <li class="row"><svg><use href="#t-path"/></svg>Droga narzedzia - 114.2K - THE GEAR 1.NC</li>
                  <li class="row"><svg><use href="#t-stock"/></svg>Aktualizowac przygotówke</li>
                </ul>
              </li>
              <li>
                <div class="row op"><b></b><svg><use href="#t-op"/></svg>3 - Toczenie rowków - [WCS: GÓRA] - [NÓZ]</div>
                <ul class="steps">
                  <li class="row"><svg><use href="#t-folder"/></svg>Parametry</li>
                  <li class="row"><svg><use href="#t-tool"/></svg>T1818: Nóz do rowków - OD GROOVE CENTER</li>
                  <li class="row"><svg><use href="#t-geom"/></svg>Geometria - (1) lancuch(y)</li>
                  <li class="row"><svg><use href="#t-path"/></svg>Droga narzedzia - 113.8K - THE GEAR 1.NC</li>
                  <li class="row"><svg><use href="#t-stock"/></svg>Aktualizowac przygotówke</li>
                </ul>
              </li>
              <li>
                <div class="row op"><b></b><svg><use href="#t-op"/></svg>4 - Toczenie czola - [WCS: GÓRA] - [NÓZ]</div>
                <ul class="steps">
                  <li class="row"><svg><use href="#t-folder"/></svg>Parametry</li>
                  <li class="row"><svg><use href="#t-tool"/></svg>T0202: Ogólny nóz tokarski - OD FINISH RIGHT</li>
                  <li class="row"><svg><use href="#t-geom"/></svg>Geometria - (1) lancuch(y)</li>
                  <li class="row"><svg><use href="#t-path"/></svg>Droga narzedzia - 6.1K - THE GEAR 1.NC</li>
                  <li class="row"><svg><use href="#t-stock"/></svg>Aktualizowac przygotówke</li>
                </ul>
              </li>
              <li>
                <div class="row op"><b></b><svg><use href="#t-op"/></svg>5 - Toczenie wykanczajaco - [WCS: GÓRA] - [NÓZ]</div>
                <ul class="steps">
                  <li class="row"><svg><use href="#t-folder"/></svg>Parametry</li>
                  <li class="row"><svg><use href="#t-tool"/></svg>T0202: Ogólny nóz tokarski - OD FINISH RIGHT</li>
                  <li class="row"><svg><use href="#t-geom"/></svg>Geometria - (1) lancuch(y)</li>
                  <li class="row"><svg><use href="#t-path"/></svg>Droga narzedzia - 6.9K - THE GEAR 1.NC</li>
                  <li class="row"><svg><use href="#t-stock"/></svg>Aktualizowac przygotówke</li>
                </ul>
              </li>
              <li class="end"><svg viewBox="0 0 16 16"><path d="M0 0l16 8-16 8z" fill="#f00"/><path d="M0 0h2v16H0z" fill="#800"/></svg></li>
            </ul>
            <div class="hscroll"><i class="left"></i><div class="thumb"><span></span></div><i class="right"></i></div>
          </div>
        </div>
      </section>

      <section class="view">
        <svg class="part" viewBox="344 163 1225 652" preserveAspectRatio="none">
          <defs>
            <linearGradient id="gold"><stop offset="0" stop-color="#6a5200"/><stop offset=".05" stop-color="#b08800"/><stop offset=".15" stop-color="#f0b800"/><stop offset=".2" stop-color="#ffd200"/><stop offset=".34" stop-color="#ff0"/><stop offset=".68" stop-color="#ff0"/><stop offset=".82" stop-color="#ffcf00"/><stop offset=".9" stop-color="#dca800"/><stop offset="1" stop-color="#705800"/></linearGradient>
            <linearGradient id="g1" href="#gold" gradientUnits="userSpaceOnUse" x1="750" y1="170" x2="651" y2="728"/>
            <linearGradient id="g2" href="#gold" gradientUnits="userSpaceOnUse" x1="764" y1="302" x2="700" y2="622"/>
            <linearGradient id="g3" href="#gold" gradientUnits="userSpaceOnUse" x1="900" y1="262" x2="795" y2="712"/>
            <linearGradient id="g4" href="#gold" gradientUnits="userSpaceOnUse" x1="944" y1="376" x2="894" y2="624"/>
            <linearGradient id="g5" href="#gold" gradientUnits="userSpaceOnUse" x1="1092" y1="330" x2="1010" y2="724"/>
            <linearGradient id="g6" href="#gold" gradientUnits="userSpaceOnUse" x1="1240" y1="364" x2="1143" y2="752"/>
            <linearGradient id="shine" gradientUnits="userSpaceOnUse" x1="798" y1="415" x2="776" y2="515"><stop offset="0" stop-color="#ffffb8" stop-opacity="0"/><stop offset=".5" stop-color="#ffffb8"/><stop offset="1" stop-color="#ffffb8" stop-opacity="0"/></linearGradient>
            <linearGradient id="glint" gradientUnits="userSpaceOnUse" x1="1000" y1="480" x2="984" y2="560"><stop offset="0" stop-color="#ffff50" stop-opacity="0"/><stop offset=".5" stop-color="#ffff50" stop-opacity=".7"/><stop offset="1" stop-color="#ffff50" stop-opacity="0"/></linearGradient>
            <clipPath id="c1"><ellipse cx="664" cy="449" rx="78" ry="252" transform="rotate(10.200 664 449)"/><ellipse cx="722" cy="459" rx="78" ry="252" transform="rotate(10.200 722 459)"/><path d="M712 201l58 10-92 496-58-10z"/></clipPath>
            <clipPath id="c2"><ellipse cx="728" cy="460" rx="55" ry="162" transform="rotate(11.700 728 460)"/><path d="M757 302l60 10-60 320-58-13z"/></clipPath>
            <clipPath id="c3"><ellipse cx="790" cy="473" rx="73" ry="235" transform="rotate(11.700 790 473)"/><ellipse cx="909" cy="497" rx="54" ry="186" transform="rotate(11.500 909 497)"/><path d="M833 242l12 2 111 76-81 359-128 25z"/></clipPath>
            <clipPath id="c4"><ellipse cx="915" cy="499" rx="44" ry="125" transform="rotate(10.600 915 499)"/><path d="M935 376l60 8-40 248-59-10z"/></clipPath>
            <clipPath id="c5"><ellipse cx="978" cy="511" rx="66" ry="197" transform="rotate(11 978 511)"/><ellipse cx="1122" cy="541" rx="54" ry="178" transform="rotate(11 1122 541)"/><path d="M1011 317l13 2 136 47-66 350-149-11z"/></clipPath>
            <clipPath id="c6"><ellipse cx="1122" cy="541" rx="54" ry="178" transform="rotate(11 1122 541)"/><ellipse cx="1267" cy="568" rx="61" ry="195" transform="rotate(11.200 1267 568)"/><path d="M1149 366l160 12-79 383-10-2-126-43z"/></clipPath>
          </defs>
          <rect x="344" y="163" width="1225" height="652" fill="#00009a"/>
          <ellipse cx="661" cy="447" rx="82" ry="258" transform="rotate(10.400 661 447)" fill="#008a38"/>
          <ellipse cx="664" cy="448" rx="82" ry="258" transform="rotate(10.400 664 448)" fill="#c09600"/>
          <rect x="540" y="180" width="300" height="560" fill="url(#g1)" clip-path="url(#c1)"/>
          <ellipse cx="722" cy="459" rx="77" ry="251" transform="rotate(10.200 722 459)" fill="#967800" stroke="#cfa000" stroke-width="2"/>
          <rect x="640" y="280" width="200" height="380" fill="url(#g2)" clip-path="url(#c2)"/>
          <rect x="690" y="220" width="320" height="520" fill="url(#g3)" clip-path="url(#c3)"/>
          <rect x="690" y="400" width="240" height="160" fill="url(#shine)" clip-path="url(#c3)"/>
          <ellipse cx="909" cy="497" rx="53" ry="185" transform="rotate(11.500 909 497)" fill="#967800" stroke="#dcaa00" stroke-width="2"/>
          <rect x="850" y="350" width="160" height="300" fill="url(#g4)" clip-path="url(#c4)"/>
          <rect x="890" y="300" width="320" height="440" fill="url(#g5)" clip-path="url(#c5)"/>
          <rect x="890" y="460" width="200" height="120" fill="url(#glint)" clip-path="url(#c5)"/>
          <rect x="1040" y="340" width="320" height="440" fill="url(#g6)" clip-path="url(#c6)"/>
          <ellipse cx="1267" cy="569" rx="61" ry="194" transform="rotate(11.200 1267 569)" fill="#00591e"/>
          <path d="M1309 378c-40-4-85 80-106 195-14 90-4 170 20 186" fill="none" stroke="#e0ac00" stroke-width="2"/>
          <path d="M575 570l16 27v8l-16 28-18-28v-6z" fill="#2020a8"/>
          <path d="M575 570l16 27-18 24-16-22z" fill="#3434ea"/>
        </svg>
        <div class="view-strip"></div>
        <div class="view-tabs"><button>Glówny Widok</button></div>
      </section>

      <aside class="quick">
        <div class="quick-bar top"><button><svg><use href="#scope-blue"/></svg></button></div>
        <div class="quick-bar">
          <button><svg><use href="#g-plus"/></svg></button>
          <button><svg><use href="#g-cloud"/></svg></button>
          <button><svg><use href="#g-lines"/></svg></button>
          <button><svg><use href="#g-circle"/></svg></button>
          <button><svg><use href="#g-fillet"/></svg></button>
          <button><svg><use href="#g-rect"/></svg></button>
          <button><svg><use href="#g-hex"/></svg></button>
          <button><svg><use href="#g-web"/></svg></button>
          <hr>
          <button><svg><use href="#g-pair"/></svg></button>
          <button><svg><use href="#g-pair"/></svg></button>
          <hr>
          <button><svg><use href="#g-box"/></svg></button>
          <button><svg><use href="#g-boxline"/></svg></button>
          <hr>
          <button><svg><use href="#g-dim"/></svg></button>
          <hr>
          <button><svg><use href="#g-no"/></svg></button>
          <button><svg><use href="#g-hands"/></svg></button>
          <button><svg><use href="#wing"/></svg></button>
        </div>
      </aside>
    </main>

    <footer class="status">
      <button>3D</button><button>Widok</button><button>Plaszczyzny</button>
      <div class="field"><label for="depth">Z:</label><div class="combo depth"><input id="depth" value="0.0"></div></div>
      <div class="combo colour"><select aria-label="Kolor"><option>10</option></select></div>
      <div class="field"><label for="level">Warstwa:</label><div class="combo level"><select id="level"><option>1</option></select></div></div>
      <button>Atrybuty</button>
      <div class="combo point"><select aria-label="Punkt"><option>✳</option></select></div>
      <div class="combo width"><select aria-label="Grubość linii"><option></option></select></div>
      <div class="combo style"><select aria-label="Rodzaj linii"><option></option></select></div>
      <button class="wide">WCS</button><button class="wide">Grupy</button><button>!</button><button>?</button>
    </footer>

    <div class="taskbar">
      <button class="start" aria-label="Start"><svg><use href="#k-orb"/></svg></button>
      <i class="dots"></i>
      <div class="nero"><span>nero</span><small>@SEARCH</small></div>
      <button class="go"><svg><use href="#k-go"/></svg></button>
      <i class="dots"></i>
      <div class="quicklaunch">
        <button><svg><use href="#k-desk"/></svg></button><button><svg><use href="#k-flip"/></svg></button><button><svg><use href="#k-media"/></svg></button><button><svg><use href="#k-ie"/></svg></button><button><svg><use href="#k-fox"/></svg></button>
      </div>
      <span class="more">»</span>
      <i class="dots"></i>
      <div class="tasks">
        <button><svg><use href="#k-folder"/></svg>CNC</button>
        <button><svg><use href="#k-fox"/></svg>CNC FORUM :: praw...</button>
        <button class="active"><svg><use href="#k-x"/></svg>Mastercam Lathe X3...</button>
      </div>
      <div class="tray">
        <b>&lt;</b><svg><use href="#k-skype"/></svg><svg><use href="#k-a"/></svg><svg><use href="#k-screen"/></svg>
        <svg class="batt"><use href="#k-batt"/></svg><svg><use href="#k-net"/></svg><svg><use href="#k-vol"/></svg>
        <time>04:15</time>
      </div>
    </div>

    <form class="dialog" onsubmit="return false">
      <div class="dialog-title">Weryfikuj<button type="button" aria-label="Zamknij"><svg viewBox="0 0 14 12"><path d="M3 2l8 8M11 2l-8 8" stroke="#802018" stroke-width="4"/><path d="M3 2l8 8M11 2l-8 8" stroke="#fff" stroke-width="2"/></svg></button></div>
      <div class="dialog-body">
        <div class="five">
          <button class="box"><svg><use href="#v-start"/></svg></button><button><svg><use href="#v-play"/></svg></button><button><svg><use href="#v-stop"/></svg></button><button><svg><use href="#v-step"/></svg></button><button><svg><use href="#v-fast"/></svg></button>
        </div>
        <div class="modes"><button><svg><use href="#v-simtool"/></svg></button><button class="on"><svg><use href="#v-tool"/></svg></button><button><svg><use href="#v-holder"/></svg></button></div>
        <fieldset class="motion">
          <legend>Regulacja&nbsp; ruchu</legend>
          <div class="line"><label for="step">Ruch/krok:</label><input id="step" value="1"></div>
          <div class="line"><label for="refresh">Ruch/odświerzać:</label><input id="refresh" value="1"></div>
          <div class="speed"><label for="speed">Prędkość</label><div class="ticks"><input type="range" id="speed" disabled></div><span>Jakość</span></div>
          <label class="check"><input type="checkbox" checked>Aktualizuj po każdej ścieżc</label>
        </fieldset>
        <fieldset class="stops">
          <legend>Opcje zatrzymania</legend>
          <label class="check"><input type="checkbox" checked>Stop na kolizji</label>
          <label class="check"><input type="checkbox">Stop na zmianie narzędzia</label>
          <label class="check"><input type="checkbox">Stop po każdej operacj</label>
        </fieldset>
        <label class="check verbose"><input type="checkbox">Podgląd parametrów obróbk</label>
        <div class="five tools">
          <button class="box dim"><svg><use href="#v-setup"/></svg></button><button class="box"><svg><use href="#v-section"/></svg></button><button class="box"><svg><use href="#v-measure"/></svg></button><button class="box dim"><svg><use href="#v-fit"/></svg></button><button class="box"><svg><use href="#v-save"/></svg></button>
        </div>
        <div class="pace">
          <button class="box"><svg><use href="#v-walk"/></svg></button>
          <input type="range" value="100" aria-label="Tempo">
          <button class="box"><svg><use href="#v-run"/></svg></button>
        </div>
        <dl class="info">
          <dt>Ścieżka:</dt><dd>Toczenie</dd>
          <dt>Narzedzie</dt><dd>2</dd>
          <dt>Nazwa</dt><dd>OD FINISH RIGHT - 35</dd>
        </dl>
        <button class="percent" disabled>100%</button>
        <div class="confirm"><button><svg><use href="#v-ok"/></svg></button><button><svg><use href="#v-cancel"/></svg></button><button><svg><use href="#help"/></svg></button></div>
      </div>
    </form>
  </div>
</body>
</html>
```
FILE: styles.css
```css
* {
  box-sizing: border-box;
}
body {
  margin: 0;
  background: #fff;
  font-family: "DejaVu Sans Condensed", "DejaVu Sans", sans-serif;
  font-size: 11px;
  color: #000;
}
button, input, select {
  font: inherit;
  color: inherit;
}
button {
  padding: 0;
  border: 0;
  background: none;
  display: flex;
  align-items: center;
  justify-content: center;
  flex: none;
}
svg {
  width: 16px;
  height: 16px;
  flex: none;
  display: block;
}
a {
  color: inherit;
  text-decoration: none;
}
ul {
  list-style: none;
  margin: 0;
  padding: 0;
}
.sprite {
  position: absolute;
  width: 0;
  height: 0;
}
.app {
  position: relative;
  background: #efefef;
  overflow: hidden;
}

/* title and menu */
.titlebar {
  display: flex;
  align-items: center;
  height: 20px;
  padding: 0 2px;
  border-top: 1px solid #444c58;
  background: linear-gradient(#bccad8, #d3e0ee);
  font-family: "Open Sans", sans-serif;
  font-size: 12px;
  color: #4c545c;
}
.caption {
  display: flex;
  justify-content: space-between;
  width: 371px;
  margin-left: 8px;
}
.window-buttons {
  display: flex;
  gap: 2px;
  margin-left: auto;
}
.window-buttons button {
  width: 28px;
  height: 15px;
  border: 1px solid #8a9bb4;
  border-radius: 2px;
  background: #c8d5e6;
}
.window-buttons svg {
  width: 14px;
  height: 12px;
}
.menu {
  display: flex;
  align-items: center;
  gap: 16px;
  height: 21px;
  padding-left: 7px;
  border-bottom: 1px solid #999;
  background: linear-gradient(#fff, #f4f8fd 30%, #dadff3 45%, #e0e4f6);
  font-family: "Open Sans", sans-serif;
  font-size: 12px;
  color: #858890;
}
.menu-first {
  display: flex;
  justify-content: space-between;
  width: 259px;
}

/* toolbars */
.toolbar {
  display: flex;
  height: 30px;
  border-top: 1px solid #fff;
}
.group {
  display: flex;
  align-items: center;
  padding-right: 4px;
  border-right: 1px solid #888;
  border-bottom: 1px solid #888;
  flex: none;
}
.group::before {
  content: "";
  width: 2px;
  height: 22px;
  margin: 0 4px;
  border-right: 1px solid #888;
  border-left: 1px solid #fff;
}
.group.apart {
  margin-left: 7px;
  border-left: 1px solid #888;
}
.toolbar button:not(.drop) {
  width: 23px;
  height: 23px;
}
.file-group {
  width: 482px;
}
.sketch-group {
  width: 281px;
}
.push {
  margin-left: auto !important;
}
.sep {
  width: 1px;
  height: 19px;
  margin: 0 4px 0 3px;
  background: #888;
}
.drop {
  width: 15px;
  height: 20px;
}
.drop::before {
  content: "";
  border: 4px solid transparent;
  border-top-color: #111;
  border-bottom: 0;
}
.drop.off::before {
  border-top-color: #888;
}

/* ribbon */
.ribbon {
  display: flex;
  height: 31px;
  border-bottom: 1px solid #999;
}
.ribbon-bar {
  display: flex;
  background: #ffffc8;
  border-top: 1px solid #999;
  border-right: 1px solid #999;
}
.coords, .select-bar {
  display: flex;
  align-items: center;
  gap: 3px;
}
.coords {
  width: 449px;
  padding: 0 8px 0 5px;
  border-right: 1px solid #999;
}
.select-bar {
  width: 574px;
  padding-left: 6px;
}
.raised {
  height: 21px;
  border: 1px solid #8a8a8a;
  border-radius: 3px;
  background: linear-gradient(#f8f8f8, #e4e4e4);
}
.raised.square, .raised.axis {
  width: 21px;
}
.raised.axis {
  text-decoration: underline;
  border-color: #bbb;
}
.raised.word {
  width: 55px;
  border-color: #bbb;
  font-family: "Liberation Sans", sans-serif;
  font-size: 12px;
}
.raised.word.off {
  color: #888;
}
.raised.tylko {
  width: 46px;
  margin: 0 6px 0 5px;
}
.flat {
  width: 22px;
  height: 21px;
  background: #eee;
  border-right: 1px solid #c8c8c8;
  border-bottom: 1px solid #c8c8c8;
}
.slim {
  width: 12px;
}
.gap {
  width: 2px;
}
.combo {
  position: relative;
  display: flex;
  background: #fff;
}
.combo::after {
  content: "";
  position: absolute;
  right: 5px;
  top: 50%;
  border: 4px solid transparent;
  border-top-color: #111;
  border-bottom: 0;
}
.combo select, .combo input {
  appearance: none;
  width: 100%;
  padding: 0 4px;
  border: 0;
  background: none;
  outline: 0;
}
.coord {
  width: 60px;
  height: 20px;
  border: 1px solid #aaa;
}
.coord-z {
  width: 100px;
  height: 21px;
  margin: 0 4px 0 auto;
  border: 1px solid #bbb;
}
.coord-z select {
  padding-left: 38px;
}
.coord-z::after, .filter::after {
  border-top-color: #999;
}
.filter {
  width: 72px;
  height: 21px;
  margin: 0 4px;
  border: 1px solid #bbb;
  border-radius: 2px;
  background: #f0f0f0;
  color: #888;
}
.filter select {
  opacity: 1;
}
.prompt {
  display: flex;
  align-items: center;
  height: 31px;
  padding-left: 2px;
  background: #ffffc8;
  border-bottom: 1px solid #888;
}
.prompt .sep {
  height: 23px;
  margin-left: 5px;
}
.prompt-help {
  margin-left: 57%;
}

/* work area */
.work {
  display: flex;
}
.solids {
  width: 44px;
  border-top: 1px solid #fff;
}
.solids-bar {
  padding: 20px 0 3px 2px;
  border-bottom: 1px solid #999;
  position: relative;
}
.solids-bar::before, .quick-bar::before {
  content: "";
  position: absolute;
  top: 12px;
  left: 3px;
  right: 3px;
  border-top: 1px solid #999;
}
.solids-bar button {
  width: 22px;
  height: 22px;
}
.solids-bar div {
  display: flex;
}
.solids-bar .drop {
  width: 20px;
}
.solids hr, .quick hr {
  margin: 3px 4px 4px;
  border: 0;
  border-top: 1px solid #999;
}
.manager {
  width: 300px;
  flex: none;
  display: flex;
  flex-direction: column;
  border-left: 1px solid #999;
  border-right: 2px solid #889;
}
.manager-head {
  display: flex;
  justify-content: flex-end;
  gap: 5px;
  height: 19px;
  padding: 2px 4px;
  background: #b4b4b4;
}
.manager-head button {
  width: 16px;
  height: 15px;
  border: 1px solid #555;
  border-radius: 2px;
  background: #f2f2f2;
}
.manager-head svg {
  width: 10px;
  height: 10px;
}
.down::before {
  content: "";
  border: 4px solid transparent;
  border-top-color: #111;
  border-bottom: 0;
}
.manager-tabs {
  height: 20px;
}
.manager-body {
  flex: 1;
  padding: 2px 4px 6px;
  border-top: 1px solid #999;
  border-right: 2px solid #fff;
}
.manager-tools {
  display: flex;
  align-items: center;
  justify-content: flex-end;
  gap: 3px;
  height: 32px;
  margin-right: 11px;
  padding-right: 22px;
  border-top: 1px solid #999;
  border-bottom: 1px solid #999;
}
.manager-mini {
  display: flex;
  height: 37px;
  padding: 14px 0 0 210px;
}
.manager-mini i {
  width: 8px;
  height: 10px;
  border: 1px solid #aaa;
}
.tree {
  width: 288px;
  border: 1px solid #777;
  background: #fff;
  overflow: hidden;
}
.tree .row {
  display: flex;
  align-items: center;
  gap: 4px;
  height: 16px;
  white-space: nowrap;
}
.root {
  padding: 1px 0 0 40px;
}
.machine {
  justify-content: flex-end;
  width: 208px;
}
.machine span {
  padding: 0 2px;
  line-height: 15px;
  background: #3399f0;
  color: #fff;
}
.ops {
  margin-left: 50px;
}
.ops > li {
  position: relative;
  border-left: 1px dotted #555;
}
.op::before {
  content: "";
  width: 7px;
  border-top: 1px dotted #555;
}
.tree .op {
  gap: 3px;
}
.op b {
  position: absolute;
  left: -5px;
  top: 4px;
  width: 9px;
  height: 9px;
  border: 1px solid #888;
  background: linear-gradient(#fff 3px, #225 3px, #225 4px, #fff 4px);
}
.steps {
  margin-left: 18px;
  border-left: 1px dotted #555;
}
.steps .row::before {
  content: "";
  width: 7px;
  margin-right: -1px;
  border-top: 1px dotted #555;
}
.ops > .end {
  height: 16px;
  padding-left: 10px;
}
.hscroll {
  display: flex;
  align-items: center;
  height: 17px;
  background: #ececec;
}
.hscroll i {
  width: 19px;
  display: flex;
  justify-content: center;
}
.hscroll i::before {
  content: "";
  border: 3px solid transparent;
}
.hscroll .left::before {
  border-right-color: #222;
  border-left: 0;
}
.hscroll .right::before {
  border-left-color: #222;
  border-right: 0;
}
.hscroll .right {
  margin-left: auto;
}
.thumb {
  display: flex;
  align-items: center;
  justify-content: center;
  width: 115px;
  height: 15px;
  border: 1px solid #999;
  border-radius: 2px;
  background: linear-gradient(#f6f6f6 50%, #dcdcdc 50%);
}
.thumb span {
  width: 7px;
  height: 6px;
  background: repeating-linear-gradient(90deg, #777 0 1px, transparent 1px 3px);
}
.view {
  flex: 1;
  display: flex;
  flex-direction: column;
  min-width: 0;
}
.part {
  flex: 1;
  width: 100%;
  min-height: 400px;
}
.view-strip {
  height: 4px;
  background: #fff;
  border-bottom: 1px solid #889;
}
.view-tabs {
  height: 26px;
  padding-left: 2px;
}
.view-tabs button {
  width: 109px;
  height: 25px;
  border: 1px solid #889;
  border-top: 0;
  background: #fff;
  font-family: "Open Sans", sans-serif;
  font-size: 12px;
}
.quick {
  width: 31px;
  border-left: 2px solid #fff;
}
.quick-bar {
  position: relative;
  padding: 15px 0 3px 2px;
  border-bottom: 1px solid #999;
}
.quick-bar::before {
  top: 4px;
}
.quick-bar.top {
  height: 187px;
  padding-top: 13px;
}
.quick-bar button {
  width: 26px;
  height: 22px;
}
.quick-bar hr {
  margin: 2px 5px 5px;
}
.quick-bar.top + .quick-bar {
  padding-top: 6px;
}

/* status bar */
.status {
  display: flex;
  align-items: center;
  justify-content: flex-end;
  gap: 6px;
  height: 27px;
  padding: 3px 0 1px;
  border-top: 1px solid #889;
  background: #efecec;
  font-family: "Open Sans", sans-serif;
  font-size: 12px;
}
.status > button {
  height: 20px;
  padding: 0 3px;
  border: 1px solid #a8b0b8;
  border-radius: 2px;
  background: #f4f4f4;
}
.status > button:last-child {
  padding: 0 1px;
}
.status .wide {
  min-width: 39px;
}
.status .combo {
  height: 20px;
}
.status .field {
  display: flex;
  align-items: center;
  height: 20px;
  border: 1px solid #a8b0b8;
  border-right: 0;
}
.status .field label {
  padding: 0 5px;
}
.status .depth {
  width: 78px;
}
.depth input {
  max-width: 56px;
  height: 18px;
  background: #ffff80;
  font-weight: bold;
}
.status .colour {
  width: 46px;
  border: 1px solid #888;
  background: linear-gradient(90deg, #0f0 31px, #fff 31px);
}
.status .colour::after {
  right: 2px;
  border-width: 7px 4px 0;
  margin-top: -3px;
}
.colour select {
  padding-left: 7px;
}
.status .level {
  width: 87px;
}
.status .point {
  width: 36px;
}
.status .width, .status .style {
  width: 62px;
}
.status .style {
  width: 68px;
}
.width select, .style select {
  margin: 9px 20px 8px 2px;
  height: 3px;
  background: #000;
}
.style select {
  height: 1px;
  margin-top: 10px;
}

/* taskbar */
.taskbar {
  display: flex;
  align-items: center;
  height: 31px;
  background: linear-gradient(#8c8f90, #4c4f50 45%, #101414 50%, #101414);
  color: #fff;
  font-family: "Open Sans", sans-serif;
  font-size: 12px;
  overflow: hidden;
}
.start {
  margin: 0 12px 0 8px;
}
.start svg {
  width: 44px;
  height: 44px;
  margin-top: 8px;
}
.dots {
  width: 9px;
  height: 22px;
  background: radial-gradient(circle, #222 1px, transparent 1px) 0 0 / 3px 4px;
}
.nero {
  display: flex;
  flex-direction: column;
  align-items: center;
  width: 88px;
  height: 21px;
  margin: 0 6px 0 5px;
  background: #fff;
  color: #777;
  font-family: "Liberation Sans", sans-serif;
  line-height: 10px;
  font-weight: bold;
}
.nero small {
  font-size: 8px;
}
.go {
  margin-right: 24px;
}
.quicklaunch {
  display: flex;
  gap: 7px;
  margin: 0 22px 0 9px;
}
.more {
  margin-right: 8px;
  padding-bottom: 10px;
  font-size: 14px;
}
.tasks {
  display: flex;
  gap: 4px;
  margin-left: 8px;
}
.tasks button {
  justify-content: flex-start;
  gap: 6px;
  width: 156px;
  height: 27px;
  padding-left: 8px;
  border: 1px solid #222;
  border-radius: 3px;
  background: linear-gradient(#8a8c8e, #55585a 48%, #26292b 52%, #3a3d3f);
  box-shadow: inset 0 0 0 1px #777;
}
.tasks .active {
  background: linear-gradient(#444, #222 48%, #000 52%, #181818);
  box-shadow: inset 0 0 0 1px #444;
}
.tray {
  display: flex;
  align-items: center;
  gap: 2px;
  margin-left: auto;
  padding-right: 13px;
}
.tray b {
  margin-right: 6px;
}
.tray .batt {
  margin-left: 10px;
}
.tray time {
  margin-left: 6px;
}

/* verify dialog */
.dialog {
  position: absolute;
  left: 43px;
  top: 1px;
  width: 221px;
  height: 633px;
  border: 1px solid #123;
  box-shadow: inset 0 0 0 1px #48c8e8;
  background: #f0f0f0;
  font-family: "Liberation Sans", sans-serif;
}
.dialog-title {
  display: flex;
  align-items: center;
  justify-content: space-between;
  height: 22px;
  padding: 0 4px 0 6px;
  background: linear-gradient(#cfe0f2, #a9c6e4);
  font-family: "Open Sans", sans-serif;
  font-size: 12px;
}
.dialog-title button {
  width: 28px;
  height: 15px;
  border: 1px solid #6b1a14;
  border-radius: 2px;
  background: linear-gradient(#e8a090, #c43820 50%, #d05840);
}
.dialog-title svg {
  width: 14px;
  height: 12px;
}
.dialog-body {
  display: flex;
  flex-direction: column;
  padding: 11px 13px 0 14px;
}
.five {
  display: flex;
  gap: 9px;
  padding-left: 6px;
}
.five button {
  width: 28px;
  height: 27px;
}
.box {
  width: 28px;
  height: 27px;
  border: 1px solid #707070;
  border-radius: 3px;
  background: linear-gradient(#f4f4f4, #dcdcdc);
}
.box.dim {
  border-color: #bbb;
  background: #f0f0f0;
}
.five > .box:first-child svg {
  width: 18px;
}
.modes {
  display: flex;
  gap: 6px;
  margin-top: 12px;
  padding-left: 43px;
}
.modes button {
  width: 32px;
  height: 32px;
  border: 1px solid #888;
  border-radius: 3px;
  background: linear-gradient(#f0f0f0, #ddd);
}
.modes .on {
  border-color: #2c628b;
  background: linear-gradient(#d8ecf8 50%, #98c8e8 50%);
}
.modes svg {
  width: 30px;
  height: 30px;
}
.dialog fieldset {
  min-width: 0;
  margin: 0;
  padding: 0 5px;
  border: 1px solid #dcdcdc;
  border-radius: 3px;
}
.dialog legend {
  margin-left: 1px;
  padding: 0 2px;
  line-height: 14px;
}
.dialog .motion {
  height: 145px;
  margin-top: 7px;
}
.line {
  display: flex;
  align-items: center;
  justify-content: space-between;
  height: 21px;
  margin: 4px 6px 0 18px;
}
.motion legend + .line {
  margin-top: 5px;
}
.line input {
  width: 58px;
  height: 21px;
  padding: 0 2px 4px;
  border: 1px solid #ddd;
  background: #ffff80;
}
.speed {
  display: flex;
  align-items: center;
  gap: 12px;
  margin-top: 11px;
  height: 34px;
  color: #999;
}
.ticks {
  width: 68px;
  height: 32px;
  background: repeating-linear-gradient(90deg, #bbb 0 1px, transparent 1px 14px) 5px 0 / 58px 3px no-repeat, repeating-linear-gradient(90deg, #bbb 0 1px, transparent 1px 14px) 5px 100% / 58px 3px no-repeat;
}
input[type="range"] {
  appearance: none;
  width: 100%;
  height: 22px;
  margin: 5px 0 0;
  background: linear-gradient(#aaa, #aaa) 0 50% / 100% 1px no-repeat;
}
input[type="range"]::-webkit-slider-thumb {
  appearance: none;
  width: 10px;
  height: 21px;
  border: 1px solid #888;
  border-radius: 2px;
  background: #f2f2f2;
}
.check {
  display: flex;
  align-items: center;
  gap: 3px;
  height: 22px;
  white-space: nowrap;
}
.check input {
  appearance: none;
  width: 13px;
  height: 13px;
  margin: 0;
  border: 1px solid #8a8a8a;
  background: linear-gradient(135deg, #d4d4d4, #fafafa);
  box-shadow: inset 0 0 0 1px #f4f4f4;
}
.check input:checked::after {
  content: "";
  display: block;
  width: 4px;
  height: 7px;
  margin: 1px 0 0 4px;
  border: solid #4a5f97;
  border-width: 0 2px 2px 0;
  transform: rotate(40deg);
}
.motion .check {
  margin-top: 8px;
}
.dialog .stops {
  height: 96px;
  margin-top: 10px;
}
.stops .check:nth-of-type(1) {
  margin-top: 6px;
}
.verbose {
  margin-top: 6px;
  padding-left: 6px;
}
.tools {
  margin-top: 9px;
}
.box svg {
  width: 18px;
  height: 18px;
}
.pace {
  display: flex;
  align-items: center;
  gap: 23px;
  margin-top: 16px;
  padding: 0 8px 0 6px;
}
.pace input[type="range"] {
  flex: 1;
  min-width: 0;
  margin: 0;
}
.info {
  display: grid;
  grid-template-columns: 64px 1fr;
  align-content: space-around;
  height: 63px;
  margin: 14px 0 0;
  padding: 2px 0 0 8px;
  border: 1px solid #dcdcdc;
  white-space: nowrap;
}
.info dd {
  margin: 0;
}
.percent {
  align-self: center;
  width: 36px;
  height: 23px;
  margin-top: 9px;
  border: 1px solid #aaa;
  border-radius: 2px;
  background: #f2f2f2;
  color: #888;
}
.confirm {
  display: flex;
  gap: 8px;
  margin-top: 7px;
  padding-left: 10px;
}
.confirm button {
  width: 52px;
  height: 27px;
  border: 1px solid #707070;
  border-radius: 3px;
  background: linear-gradient(#f2f2f2 50%, #dcdcdc);
}
.confirm svg {
  width: 18px;
  height: 20px;
}
```
